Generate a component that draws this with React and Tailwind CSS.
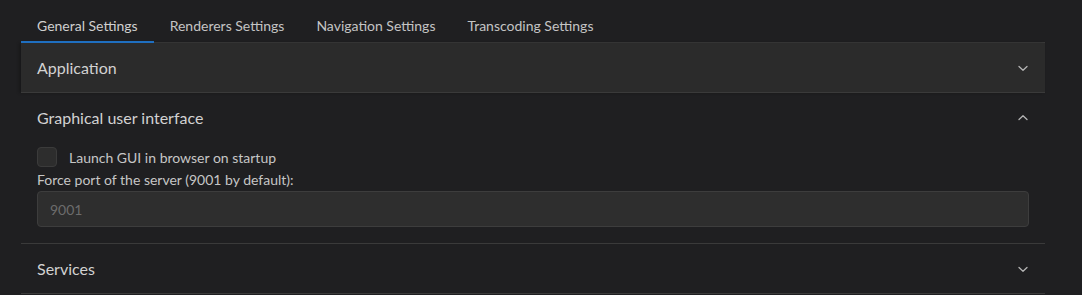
import React from "react";

function Chevron({ up = false }) {
  return (
    <svg width="12" height="12" viewBox="0 0 12 12" fill="none" className="text-[#b5b5b5]">
      <path
        d={up ? "M2 7.5L6 3.8L10 7.5" : "M2 4.5L6 8.2L10 4.5"}
        stroke="currentColor"
        strokeWidth="1.3"
        strokeLinecap="round"
        strokeLinejoin="round"
      />
    </svg>
  );
}

export default function App() {
  const tabs = ["General Settings", "Renderers Settings", "Navigation Settings", "Transcoding Settings"];
  return (
    <div className="min-h-[295px] bg-[#1f1f21] font-['Lato','Liberation_Sans',sans-serif] text-[#c8c8c8]">
      <div className="ml-[21px] w-[1024px]">
        <div className="flex border-b border-[#3a3a3a]">
          {tabs.map((t, i) => (
            <div
              key={t}
              className={
                "h-[43px] px-4 pt-[9px] flex items-center text-[14px] -mb-px border-b-2 " +
                (i === 0 ? "border-[#1f6fc0] text-[#cfcfcf]" : "border-transparent text-[#c4c4c4]")
              }
            >
              {t}
            </div>
          ))}
        </div>

        <div className="h-[50px] bg-[#2b2b2b] px-4 flex items-center justify-between border-b border-[#3a3a3a] shadow-[-2px_0_3px_rgba(0,0,0,0.25)]">
          <span className="text-[16px] text-[#d2d2d2]">Application</span>
          <Chevron />
        </div>

        <div className="border-b border-[#3a3a3a]">
          <div className="h-[50px] px-4 flex items-center justify-between">
            <span className="text-[16px] text-[#d2d2d2]">Graphical user interface</span>
            <Chevron up />
          </div>
          <div className="px-4 pt-1 pb-4">
            <div className="flex items-center h-5">
              <div className="w-5 h-5 rounded-[4px] bg-[#2d2d2d] border border-[#3b3b3b]" />
              <span className="ml-3 text-[14px] text-[#c6c6c6]">Launch GUI in browser on startup</span>
            </div>
            <div className="mt-[3px] text-[14px] leading-[20px] text-[#c6c6c6]">Force port of the server (9001 by default):</div>
            <div className="mt-[1px] h-[36px] rounded-[4px] bg-[#2e2e2e] border border-[#3d3d3d] px-3 flex items-center text-[14px] text-[#6c6c6c]">
              9001
            </div>
          </div>
        </div>

        <div className="h-[50px] px-4 flex items-center justify-between border-b border-[#3a3a3a]">
          <span className="text-[16px] text-[#d2d2d2]">Services</span>
          <Chevron />
        </div>
      </div>
    </div>
  );
}
